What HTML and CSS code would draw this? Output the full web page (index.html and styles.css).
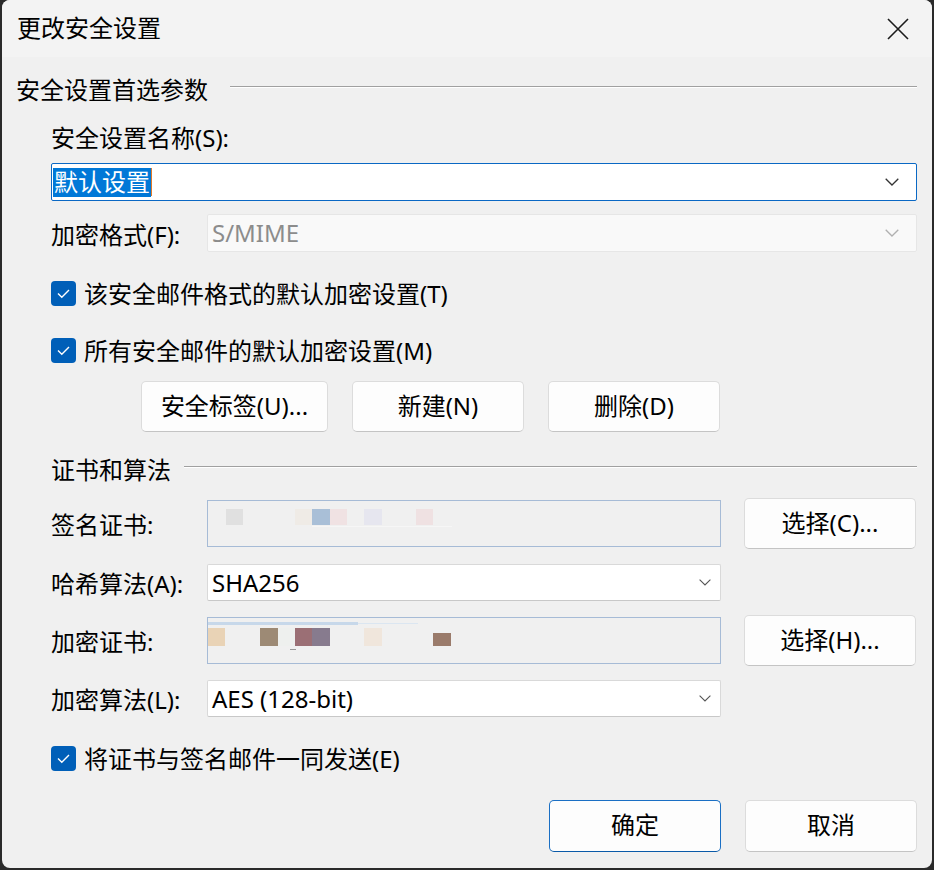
FILE: index.html
```html
<!DOCTYPE html>
<html lang="zh-CN">
<head>
<meta charset="utf-8">
<title>更改安全设置</title>
<link rel="stylesheet" href="styles.css">
</head>
<body>
<div class="window">
  <div class="titlebar">
    <span class="title">更改安全设置</span>
    <span class="close" aria-label="关闭">
      <svg width="22" height="22" viewBox="0 0 22 22"><path d="M1 1 L21 21 M21 1 L1 21" stroke="#1b1b1b" stroke-width="1.6" fill="none"/></svg>
    </span>
  </div>

  <div class="content">
    <div class="group-head first">
      <span class="group-title">安全设置首选参数</span>
      <span class="rule"></span>
    </div>

    <div class="indent">
      <div class="label-line">安全设置名称(S):</div>
      <div class="combo edit">
        <span class="combo-text"><span class="selected">默认设置</span><span class="caret"></span></span>
        <svg class="chev big" width="14" height="8" viewBox="0 0 14 8"><path d="M0.7 0.7 L7 7 L13.3 0.7" stroke="#333" stroke-width="1.3" fill="none"/></svg>
      </div>

      <div class="row row-f">
        <span class="label">加密格式(F):</span>
        <div class="combo disabled">
          <span class="combo-text">S/MIME</span>
          <svg class="chev big" width="14" height="8" viewBox="0 0 14 8"><path d="M0.7 0.7 L7 7 L13.3 0.7" stroke="#b0b0b0" stroke-width="1.3" fill="none"/></svg>
        </div>
      </div>

      <div class="check cb1">
        <span class="box"><svg width="25" height="25" viewBox="0 0 25 25"><path d="M7 12.5 L10.8 16.3 L18 9" stroke="#fff" stroke-width="1.4" fill="none"/></svg></span>
        <span>该安全邮件格式的默认加密设置(T)</span>
      </div>
      <div class="check cb2">
        <span class="box"><svg width="25" height="25" viewBox="0 0 25 25"><path d="M7 12.5 L10.8 16.3 L18 9" stroke="#fff" stroke-width="1.4" fill="none"/></svg></span>
        <span>所有安全邮件的默认加密设置(M)</span>
      </div>

      <div class="btn-row">
        <button class="btn w-label">安全标签(U)...</button>
        <button class="btn">新建(N)</button>
        <button class="btn">删除(D)</button>
      </div>
    </div>

    <div class="group-head second">
      <span class="group-title">证书和算法</span>
      <span class="rule"></span>
    </div>

    <div class="indent">
      <div class="cert-row sign">
        <span class="label">签名证书:</span>
        <div class="cert-field">
          <svg class="mosaic" width="300" height="40" viewBox="0 0 300 40">
            <rect x="18" y="8" width="17" height="16" fill="#e0e0e0"/>
            <rect x="87" y="8" width="17" height="16" fill="#efebe6"/>
            <rect x="104" y="8" width="18" height="16" fill="#a9bfd7"/>
            <rect x="122" y="8" width="17" height="16" fill="#f0e2e3"/>
            <rect x="156" y="8" width="18" height="16" fill="#e6e6ef"/>
            <rect x="208" y="8" width="17" height="16" fill="#efe1e2"/>
            <rect x="104" y="25" width="140" height="1" fill="#f6f6f6"/>
          </svg>
        </div>
        <button class="btn">选择(C)...</button>
      </div>

      <div class="cert-row combo-row">
        <span class="label">哈希算法(A):</span>
        <div class="combo small">
          <span class="combo-text">SHA256</span>
          <svg class="chev" width="12" height="7" viewBox="0 0 12 7"><path d="M0.6 0.6 L6 6 L11.4 0.6" stroke="#555" stroke-width="1.1" fill="none"/></svg>
        </div>
      </div>

      <div class="cert-row enc">
        <span class="label">加密证书:</span>
        <div class="cert-field">
          <svg class="mosaic" width="300" height="40" viewBox="0 0 300 40">
            <rect x="0" y="4" width="150" height="3" fill="#c7d8ea"/>
            <rect x="150" y="5" width="60" height="1" fill="#dbe6f1"/>
            <rect x="0" y="10" width="17" height="18" fill="#e9d3b6"/>
            <rect x="52" y="10" width="18" height="18" fill="#9d8a75"/>
            <rect x="70" y="10" width="17" height="18" fill="#eef0ee"/>
            <rect x="87" y="10" width="17" height="18" fill="#9b6f75"/>
            <rect x="104" y="10" width="18" height="18" fill="#877b8e"/>
            <rect x="156" y="10" width="18" height="18" fill="#f0e6dc"/>
            <rect x="225" y="15" width="18" height="13" fill="#9a7b6b"/>
            <rect x="82" y="31" width="6" height="1" fill="#999"/>
          </svg>
        </div>
        <button class="btn">选择(H)...</button>
      </div>

      <div class="cert-row combo-row alg">
        <span class="label">加密算法(L):</span>
        <div class="combo small">
          <span class="combo-text">AES (128-bit)</span>
          <svg class="chev" width="12" height="7" viewBox="0 0 12 7"><path d="M0.6 0.6 L6 6 L11.4 0.6" stroke="#555" stroke-width="1.1" fill="none"/></svg>
        </div>
      </div>

      <div class="check cb3">
        <span class="box"><svg width="25" height="25" viewBox="0 0 25 25"><path d="M7 12.5 L10.8 16.3 L18 9" stroke="#fff" stroke-width="1.4" fill="none"/></svg></span>
        <span>将证书与签名邮件一同发送(E)</span>
      </div>
    </div>

    <div class="footer">
      <button class="btn default">确定</button>
      <button class="btn">取消</button>
    </div>
  </div>
</div>
</body>
</html>
```

FILE: styles.css
```css
* {
  box-sizing: border-box;
}

html, body {
  margin: 0;
  padding: 0;
  background: #2a2a2a;
}

body {
  width: 934px;
  height: 870px;
  overflow: hidden;
  font-family: "Segoe UI", "Noto Sans", "Noto Sans CJK SC", sans-serif;
  font-size: 24px;
  color: #000;
}

.window {
  margin: 0 2px;
  width: 930px;
  height: 868px;
  background: #f0f0f0;
  border-radius: 8px;
  overflow: hidden;
  display: flex;
  flex-direction: column;
}

/* title bar */
.titlebar {
  height: 57px;
  flex: none;
  background: #f3f3f3;
  display: flex;
  align-items: center;
  justify-content: space-between;
  padding: 0 15px 0 15px;
}

.title {
  line-height: 1;
  padding-bottom: 2px;
}

.close {
  display: flex;
  width: 22px;
  height: 22px;
  margin-right: 8px;
}

/* body */
.content {
  display: flex;
  flex-direction: column;
  padding: 0 15px 0 14px;
}

.group-head {
  height: 34px;
  display: flex;
  align-items: center;
}

.group-head.first {
  margin-top: 16px;
}

.group-head.second {
  margin-top: 21px;
  padding-left: 35px;
}

.group-title {
  line-height: 1;
}

.rule {
  flex: 1;
  height: 2px;
  border-top: 1px solid #a0a0a0;
  border-bottom: 1px solid #ffffff;
  margin-top: -7px;
}

.first .rule {
  margin-left: 22px;
}

.second .rule {
  margin-left: 13px;
}

.indent {
  padding-left: 35px;
  display: flex;
  flex-direction: column;
}

.label-line {
  height: 34px;
  margin-top: 14px;
  display: flex;
  align-items: center;
  line-height: 1;
}

/* combo boxes */
.combo {
  display: flex;
  align-items: center;
  justify-content: space-between;
  background: #fff;
  border: 1px solid #d9d9d9;
  border-bottom-color: #c8c8c8;
  border-radius: 2px;
}

.combo-text {
  line-height: 1;
  display: flex;
  align-items: center;
}

.combo.edit {
  height: 38px;
  margin-top: 8px;
  border: 1px solid #0a68c4;
  padding: 0 17px 0 1px;
}

.selected {
  background: #0078d7;
  color: #fff;
  padding: 2px 1px 3px 1px;
  line-height: 1;
}

.caret {
  display: inline-block;
  width: 1px;
  height: 28px;
  background: #e07a2a;
}

.chev {
  flex: none;
}

.combo.disabled {
  height: 38px;
  flex: 1;
  background: #f9f9f9;
  border-color: #e6e6e6;
  color: #8c8c8c;
  padding: 0 17px 0 4px;
}

.row {
  display: flex;
  align-items: center;
}

.row-f {
  margin-top: 13px;
}

.label {
  width: 156px;
  flex: none;
  line-height: 1;
  padding-top: 3px;
}

/* check boxes */
.check {
  height: 26px;
  display: flex;
  align-items: center;
  gap: 8px;
}

.check span:last-child {
  line-height: 1;
  padding-top: 2px;
}

.box {
  width: 25px;
  height: 25px;
  flex: none;
  background: #005fb8;
  border-radius: 4px;
  display: flex;
}

.cb1 {
  margin-top: 28px;
}

.cb2 {
  margin-top: 31px;
}

.cb3 {
  margin-top: 28px;
}

/* buttons */
.btn {
  font: inherit;
  color: #000;
  width: 172px;
  height: 51px;
  background: #fdfdfd;
  border: 1px solid #dcdcdc;
  border-bottom-color: #c4c4c4;
  border-radius: 5px;
  padding: 0 0 2px 0;
  line-height: 1;
}

.btn-row {
  display: flex;
  gap: 24px;
  margin-top: 18px;
  padding-left: 90px;
}

.btn.w-label {
  width: 187px;
}

/* certificate section */
.cert-row {
  display: flex;
  align-items: center;
  height: 51px;
}

.cert-row.sign {
  margin-top: 11px;
}

.cert-row.enc {
  margin-top: 14px;
}

.cert-row.combo-row {
  height: 37px;
  margin-top: 15px;
}

.cert-row.alg {
  margin-top: 14px;
}

.cert-field {
  width: 514px;
  height: 47px;
  border: 1px solid #a6bbd6;
  background: #f0f0f0;
  margin-right: 23px;
  display: flex;
}

.mosaic {
  display: block;
}

.combo.small {
  width: 514px;
  height: 37px;
  padding: 0 9px 0 4px;
}

.footer {
  display: flex;
  justify-content: flex-end;
  gap: 24px;
  margin-top: 29px;
}

.footer .btn {
  height: 52px;
}

.btn.default {
  border: 1px solid #1a6fc4;
  border-bottom-color: #0a5aa8;
}
```
